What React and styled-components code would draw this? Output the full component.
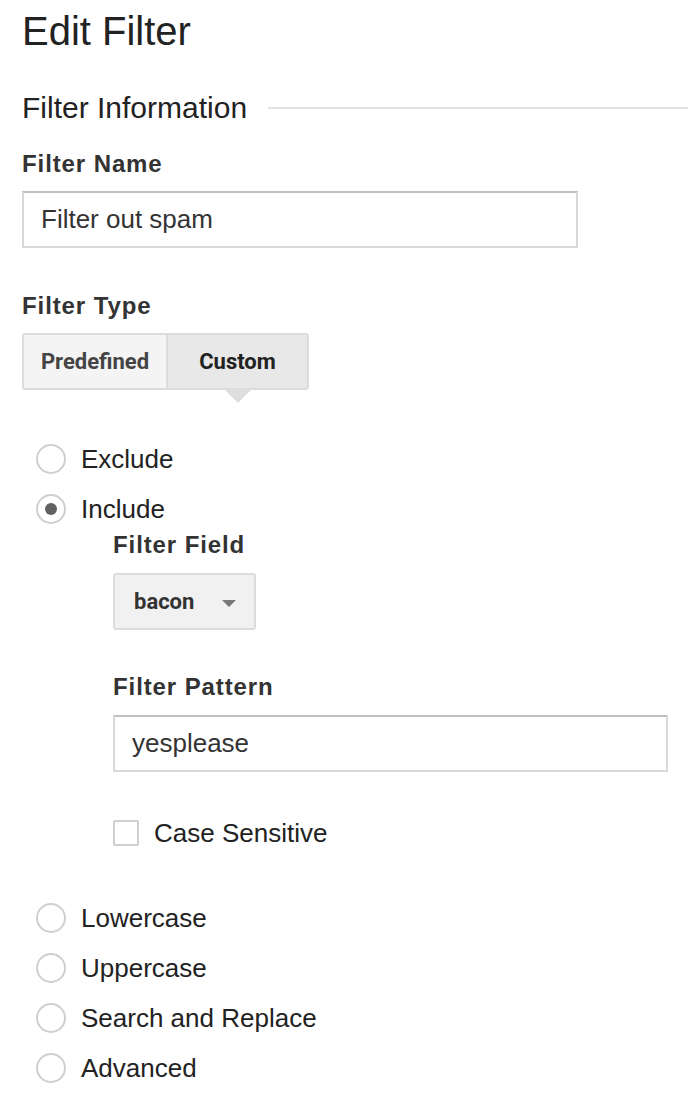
import React, { useState } from "react";
import styled, { createGlobalStyle } from "styled-components";

const GlobalStyle = createGlobalStyle`
  body {
    margin: 0;
    background: #fff;
    font-family: "Liberation Sans", Arial, sans-serif;
    color: #222;
  }
`;

const Page = styled.div`
  padding: 8px 0 40px 22px;
  width: 666px;
`;

const Title = styled.h1`
  margin: 0;
  font-weight: 400;
  font-size: 40px;
  line-height: 46px;
  color: #222;
`;

const SectionHead = styled.div`
  display: flex;
  align-items: center;
  margin-top: 39px;
  height: 30px;
`;

const SectionTitle = styled.span`
  font-size: 30px;
  color: #222;
  white-space: nowrap;
`;

const Rule = styled.div`
  flex: 1;
  height: 2px;
  background: #e2e2e2;
  margin-left: 21px;
`;

const Label = styled.div`
  font-weight: 700;
  font-size: 24px;
  letter-spacing: 0.9px;
  line-height: 26px;
  color: #333;
  margin-top: ${(p) => p.$top || 0}px;
`;

const TextInput = styled.input`
  display: block;
  box-sizing: border-box;
  width: ${(p) => p.$width}px;
  height: 57px;
  margin-top: ${(p) => p.$top || 14}px;
  padding: 0 17px;
  border: 2px solid #d9d9d9;
  border-top-color: #c0c0c0;
  background: #fff;
  font-family: "Liberation Sans", Arial, sans-serif;
  font-size: 26px;
  color: #333;
  outline: none;
`;

const Toggle = styled.div`
  position: relative;
  display: inline-flex;
  margin-top: 14px;
  height: 57px;
  border: 2px solid #dcdcdc;
  border-radius: 3px;
  box-sizing: border-box;
`;

const ToggleButton = styled.button`
  position: relative;
  height: 100%;
  width: ${(p) => p.$width}px;
  padding: 0;
  border: none;
  border-left: ${(p) => (p.$active ? "2px solid #dcdcdc" : "none")};
  background: ${(p) => (p.$active ? "#e8e8e8" : "#f4f4f4")};
  font-family: Roboto, "Liberation Sans", Arial, sans-serif;
  font-weight: 700;
  font-size: 22px;
  color: ${(p) => (p.$active ? "#222" : "#444")};
  cursor: pointer;

  &::after {
    content: "";
    display: ${(p) => (p.$active ? "block" : "none")};
    position: absolute;
    left: 50%;
    bottom: -15px;
    margin-left: -14px;
    border-left: 14px solid transparent;
    border-right: 14px solid transparent;
    border-top: 14px solid #dedede;
  }
`;

const RadioList = styled.div`
  display: flex;
  flex-direction: column;
  gap: 20px;
  margin-top: ${(p) => p.$top}px;
  padding-left: 14px;
`;

const RadioRow = styled.label`
  display: flex;
  align-items: center;
  height: 30px;
  cursor: pointer;
`;

const RadioCircle = styled.span`
  box-sizing: border-box;
  width: 30px;
  height: 30px;
  border: 2px solid #cfcfcf;
  border-radius: 50%;
  display: flex;
  align-items: center;
  justify-content: center;
  flex-shrink: 0;

  &::after {
    content: "";
    display: ${(p) => (p.$checked ? "block" : "none")};
    width: 12px;
    height: 12px;
    border-radius: 50%;
    background: #616161;
  }
`;

const OptionText = styled.span`
  margin-left: 15px;
  font-size: 26px;
  color: #222;
`;

const Nested = styled.div`
  padding-left: 91px;
  margin-top: 6px;
`;

const Select = styled.div`
  display: inline-flex;
  align-items: center;
  box-sizing: border-box;
  margin-top: 15px;
  height: 57px;
  width: 143px;
  padding: 0 18px 0 19px;
  border: 2px solid #dcdcdc;
  border-radius: 3px;
  background: #f1f1f1;
  font-family: Roboto, "Liberation Sans", Arial, sans-serif;
  font-weight: 700;
  font-size: 22px;
  color: #333;
`;

const SelectValue = styled.span`
  flex: 1;
`;

const Caret = styled.span`
  width: 0;
  height: 0;
  border-left: 7px solid transparent;
  border-right: 7px solid transparent;
  border-top: 7px solid #777;
  margin-top: 4px;
`;

const CheckRow = styled.label`
  display: flex;
  align-items: center;
  margin-top: 48px;
  height: 26px;
`;

const CheckBox = styled.span`
  box-sizing: border-box;
  width: 26px;
  height: 26px;
  border: 2px solid #cfcfcf;
  border-radius: 2px;
  background: #fff;
`;

const options = ["Lowercase", "Uppercase", "Search and Replace", "Advanced"];

export default function App() {
  const [type, setType] = useState("custom");
  const [mode, setMode] = useState("include");

  return (
    <>
      <GlobalStyle />
      <Page>
        <Title>Edit Filter</Title>
        <SectionHead>
          <SectionTitle>Filter Information</SectionTitle>
          <Rule />
        </SectionHead>

        <Label $top={28}>Filter Name</Label>
        <TextInput $width={556} defaultValue="Filter out spam" />

        <Label $top={45}>Filter Type</Label>
        <Toggle>
          <ToggleButton $width={142} $active={type === "predefined"} onClick={() => setType("predefined")}>
            Predefined
          </ToggleButton>
          <ToggleButton $width={141} $active={type === "custom"} onClick={() => setType("custom")}>
            Custom
          </ToggleButton>
        </Toggle>

        <RadioList $top={54}>
          <RadioRow onClick={() => setMode("exclude")}>
            <RadioCircle $checked={mode === "exclude"} />
            <OptionText>Exclude</OptionText>
          </RadioRow>
          <RadioRow onClick={() => setMode("include")}>
            <RadioCircle $checked={mode === "include"} />
            <OptionText>Include</OptionText>
          </RadioRow>
        </RadioList>

        <Nested>
          <Label $top={8}>Filter Field</Label>
          <Select>
            <SelectValue>bacon</SelectValue>
            <Caret />
          </Select>

          <Label $top={44}>Filter Pattern</Label>
          <TextInput $width={555} $top={15} defaultValue="yesplease" />

          <CheckRow>
            <CheckBox />
            <OptionText>Case Sensitive</OptionText>
          </CheckRow>
        </Nested>

        <RadioList $top={57}>
          {options.map((o) => (
            <RadioRow key={o} onClick={() => setMode(o)}>
              <RadioCircle $checked={mode === o} />
              <OptionText>{o}</OptionText>
            </RadioRow>
          ))}
        </RadioList>
      </Page>
    </>
  );
}
